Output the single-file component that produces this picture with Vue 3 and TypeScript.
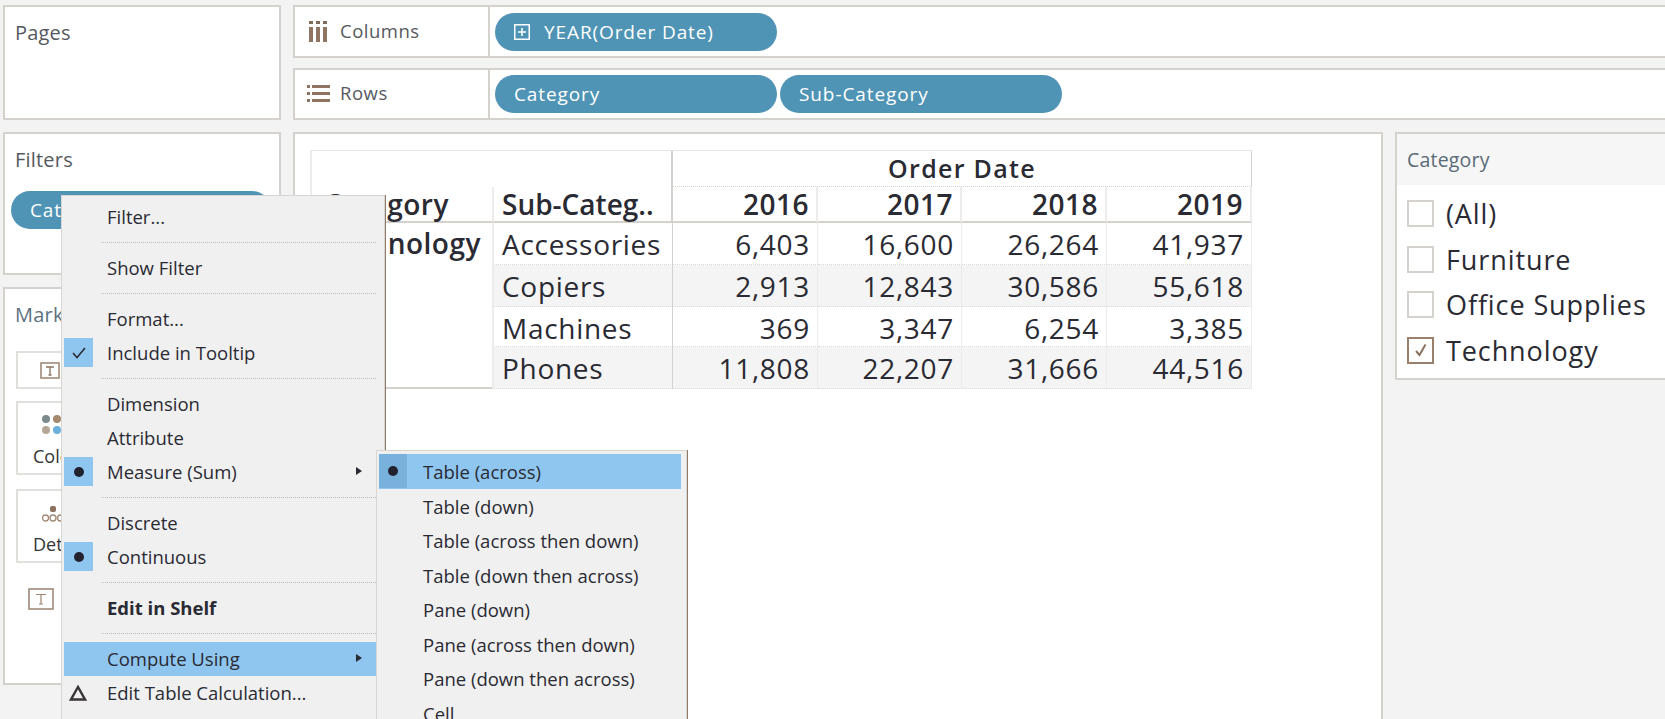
<script setup lang="ts">
type Row = { name: string; vals: string[] };
const years: string[] = ['2016', '2017', '2018', '2019'];
const rows: Row[] = [
  { name: 'Accessories', vals: ['6,403', '16,600', '26,264', '41,937'] },
  { name: 'Copiers', vals: ['2,913', '12,843', '30,586', '55,618'] },
  { name: 'Machines', vals: ['369', '3,347', '6,254', '3,385'] },
  { name: 'Phones', vals: ['11,808', '22,207', '31,666', '44,516'] },
];
const filters = [
  { label: '(All)', checked: false },
  { label: 'Furniture', checked: false },
  { label: 'Office Supplies', checked: false },
  { label: 'Technology', checked: true },
];
type Item = { label?: string; mark?: 'check' | 'dot' | 'delta'; arrow?: boolean; bold?: boolean; hover?: boolean; sep?: boolean };
const menu: Item[] = [
  { label: 'Filter...' },
  { sep: true },
  { label: 'Show Filter' },
  { sep: true },
  { label: 'Format...' },
  { label: 'Include in Tooltip', mark: 'check' },
  { sep: true },
  { label: 'Dimension' },
  { label: 'Attribute' },
  { label: 'Measure (Sum)', mark: 'dot', arrow: true },
  { sep: true },
  { label: 'Discrete' },
  { label: 'Continuous', mark: 'dot' },
  { sep: true },
  { label: 'Edit in Shelf', bold: true },
  { sep: true },
  { label: 'Compute Using', arrow: true, hover: true },
  { label: 'Edit Table Calculation...', mark: 'delta' },
];
const submenu: string[] = [
  'Table (down)',
  'Table (across then down)',
  'Table (down then across)',
  'Pane (down)',
  'Pane (across then down)',
  'Pane (down then across)',
  'Cell',
];
</script>

<template>
  <div class="page">
    <aside class="left">
      <section class="card pages"><div class="cap">Pages</div></section>
      <section class="card filters">
        <div class="cap">Filters</div>
        <div class="pill filter-pill">Category</div>
      </section>
      <section class="card marks">
        <div class="cap marks-cap">Marks</div>
        <div class="mark-type">
          <svg width="20" height="17" viewBox="0 0 20 17"><rect x="1" y="1" width="18" height="15" fill="#fff" stroke="#a08a76" stroke-width="1.6"/><path d="M6 5h8M10 5v8M8.5 13h3" stroke="#8a7460" stroke-width="1.3" fill="none"/></svg>
        </div>
        <div class="mark-btn color-btn">
          <svg width="30" height="22" viewBox="0 0 30 22">
            <circle cx="4" cy="4" r="4" fill="#7b8a8a"/><circle cx="15" cy="4" r="4" fill="#a58a70"/>
            <circle cx="4" cy="15" r="4" fill="#b5a798"/><circle cx="15" cy="15" r="4" fill="#6cb0dc"/>
          </svg>
          <span>Color</span>
        </div>
        <div class="mark-btn detail-btn">
          <svg width="34" height="18" viewBox="0 0 34 18">
            <rect x="8" y="1" width="6" height="6" rx="2" fill="#8a7460"/>
            <circle cx="3.5" cy="13" r="3" fill="none" stroke="#a08a76" stroke-width="1.3"/>
            <circle cx="11" cy="13" r="3" fill="none" stroke="#a08a76" stroke-width="1.3"/>
            <circle cx="18.5" cy="13" r="3" fill="none" stroke="#a08a76" stroke-width="1.3"/>
          </svg>
          <span>Detail</span>
        </div>
        <div class="label-row">
          <svg width="26" height="22" viewBox="0 0 26 22"><rect x="1" y="1" width="24" height="20" fill="#fff" stroke="#a08a76" stroke-width="1.6"/><path d="M8 6.5h10M13 6.5v9.5M11 16h4" stroke="#9a8470" stroke-width="1.2" fill="none"/></svg>
        </div>
      </section>
    </aside>

    <main class="main">
      <div class="shelf columns">
        <div class="shelf-label">
          <svg width="20" height="22" viewBox="0 0 20 22" class="shelf-icon">
            <rect x="1" y="1" width="4" height="3" fill="#7d6a58"/><rect x="8" y="1" width="4" height="3" fill="#7d6a58"/><rect x="15" y="1" width="4" height="3" fill="#7d6a58"/>
            <rect x="1" y="7" width="4" height="15" fill="#8f7561"/><rect x="8" y="7" width="4" height="15" fill="#8f7561"/><rect x="15" y="7" width="4" height="15" fill="#8f7561"/>
          </svg>
          <span>Columns</span>
        </div>
        <div class="shelf-body">
          <div class="pill">
            <svg width="16" height="16" viewBox="0 0 16 16" class="plus"><rect x="0.75" y="0.75" width="14.5" height="14.5" fill="none" stroke="#fff" stroke-width="1.5"/><path d="M8 4v8M4 8h8" stroke="#fff" stroke-width="1.5"/></svg>
            <span>YEAR(Order Date)</span>
          </div>
        </div>
      </div>
      <div class="shelf rows">
        <div class="shelf-label">
          <svg width="24" height="19" viewBox="0 0 24 19" class="shelf-icon rows-icon">
            <rect x="0" y="1" width="3" height="3" fill="#8f7561"/><rect x="0" y="8" width="3" height="3" fill="#8f7561"/><rect x="0" y="15" width="3" height="3" fill="#8f7561"/>
            <rect x="5" y="1" width="18" height="3" fill="#8f7561"/><rect x="5" y="8" width="18" height="3" fill="#8f7561"/><rect x="5" y="15" width="18" height="3" fill="#8f7561"/>
          </svg>
          <span>Rows</span>
        </div>
        <div class="shelf-body">
          <div class="pill">Category</div>
          <div class="pill">Sub-Category</div>
        </div>
      </div>

      <div class="work">
        <section class="view">
          <div class="table">
            <div class="blank"></div>
            <div class="head-order">Order Date</div>
            <div class="head-cat">Category</div>
            <div class="head-sub">Sub-Categ..</div>
            <div v-for="y in years" :key="y" class="head-year">{{ y }}</div>
            <div class="cat-cell">Technology</div>
            <template v-for="(r, i) in rows" :key="r.name">
              <div class="sub-cell" :class="{ alt: i % 2 === 1 }">{{ r.name }}</div>
              <div v-for="(v, j) in r.vals" :key="j" class="num-cell" :class="{ alt: i % 2 === 1 }">{{ v }}</div>
            </template>
          </div>
        </section>

        <section class="legend">
          <div class="legend-head">Category</div>
          <div class="legend-body">
            <div v-for="f in filters" :key="f.label" class="legend-row">
              <span class="box" :class="{ on: f.checked }">
                <svg v-if="f.checked" width="16" height="16" viewBox="0 0 16 16"><path d="M3 9l3.5 4L12.5 2.5" fill="none" stroke="#8a7460" stroke-width="2"/></svg>
              </span>
              <span>{{ f.label }}</span>
            </div>
          </div>
        </section>
      </div>
    </main>

    <div class="menu">
      <template v-for="(m, i) in menu" :key="i">
        <div v-if="m.sep" class="sep"></div>
        <div v-else class="item" :class="{ hover: m.hover, bold: m.bold }">
          <span v-if="m.mark && m.mark !== 'delta'" class="mark">
            <svg v-if="m.mark === 'check'" width="16" height="14" viewBox="0 0 16 14"><path d="M2 7l4 4.5L14 2" fill="none" stroke="#2b2b33" stroke-width="1.6"/></svg>
            <i v-else class="dot"></i>
          </span>
          <span v-else-if="m.mark === 'delta'" class="delta">
            <svg width="18" height="16" viewBox="0 0 18 16"><path d="M9 2L2 14.5h14z" fill="none" stroke="#3a3536" stroke-width="2.4"/></svg>
          </span>
          <span>{{ m.label }}</span>
          <i v-if="m.arrow" class="arrow"></i>
        </div>
      </template>
    </div>

    <div class="submenu">
      <div class="item sub-hover">
        <span class="mark sub-mark"><i class="dot"></i></span>
        <span>Table (across)</span>
      </div>
      <div v-for="s in submenu" :key="s" class="item">{{ s }}</div>
    </div>
  </div>
</template>

<style>
html, body { margin: 0; background: #f3f3f3; }
</style>

<style scoped>
.page {
  position: relative;
  box-sizing: border-box;
  height: 719px;
  overflow: hidden;
  padding: 5px 0 0 3px;
  display: grid;
  grid-template-columns: 278px 1fr;
  column-gap: 12px;
  background: #f3f3f3;
  font-family: "Open Sans", "Noto Sans", sans-serif;
  color: #2a2a33;
}
.left { display: flex; flex-direction: column; gap: 12px; }
.card { box-sizing: border-box; background: #fff; border: 2px solid #d5d1cc; }
.cap { font-size: 20px; letter-spacing: 0.2px; color: #55595e; padding: 15px 0 0 10px; line-height: 22px; }
.pages { height: 115px; }
.filters { height: 143px; }
.marks { height: 398px; position: relative; }
.marks-cap { padding-top: 15px; color: #5d7280; }

.pill {
  box-sizing: border-box;
  width: 282px;
  height: 38px;
  border-radius: 19px;
  background: #4f94b5;
  color: #fff;
  font-size: 19px;
  letter-spacing: 0.9px;
  display: flex;
  align-items: center;
  padding-left: 19px;
  flex: none;
}
.pill.filter-pill { margin: 20px 0 0 6px; width: 260px; }
.plus { margin-right: 14px; }

.main { display: flex; flex-direction: column; min-width: 0; }
.shelf { box-sizing: border-box; display: flex; background: #fff; border: 2px solid #d5d1cc; border-right: 0; }
.columns { height: 53px; margin-bottom: 10px; }
.rows { height: 52px; margin-bottom: 12px; }
.shelf-label {
  box-sizing: border-box;
  width: 195px;
  flex: none;
  display: flex;
  align-items: center;
  padding-left: 13px;
  gap: 12px;
  font-size: 18.5px;
  letter-spacing: 0.5px;
  line-height: 24px;
  padding-bottom: 2px;
  color: #55595e;
  border-right: 2px solid #d5d1cc;
}
.shelf-icon { flex: none; }
.rows-icon { margin-right: -3px; margin-left: -1px; }
.shelf-body { display: flex; align-items: center; gap: 3px; padding-left: 5px; }

.work { display: flex; gap: 12px; flex: 1; min-height: 0; }
.view {
  box-sizing: border-box;
  width: 1090px;
  flex: none;
  background: #fff;
  border: 2px solid #d5d1cc;
  border-bottom: 0;
  padding: 16px 0 0 15px;
}
.table {
  display: grid;
  grid-template-columns: 182px 181px 145px 144px 145px 145px;
  grid-template-rows: 36px 36px 42px 42px 40px 42px;
  width: 942px;
  box-sizing: border-box;
  border-top: 1px solid #e6e4e1;
  font-size: 28px;
  letter-spacing: 0.7px;
}
.blank { grid-column: 1 / 3; grid-row: 1; border-left: 2px solid #eeecea; border-right: 2px solid #d5d1cc; }
.head-order {
  grid-column: 3 / 7;
  grid-row: 1;
  text-align: center;
  font-weight: 600;
  font-size: 25px;
  letter-spacing: 1.3px;
  line-height: 34px;
  border-right: 1px solid #d5d1cc;
  border-bottom: 1px dotted #d5d1cc;
}
.head-cat, .head-sub, .head-year {
  grid-row: 2;
  font-weight: 600;
  line-height: 34px;
  border-bottom: 2px solid #d5d1cc;
  box-sizing: border-box;
  letter-spacing: 0.5px;
}
.head-cat { padding-left: 12px; border-left: 2px solid #eeecea; }
.head-sub { padding-left: 8px; border-left: 2px solid #eeecea; border-right: 2px solid #d5d1cc; letter-spacing: 0; white-space: nowrap; }
.head-year { text-align: right; padding-right: 7px; border-right: 2px solid #eeecea; }
.cat-cell {
  grid-column: 1;
  grid-row: 3 / 7;
  font-weight: 600;
  padding: 2px 0 0 12px;
  line-height: 36px;
  letter-spacing: 0.5px;
  border-bottom: 2px solid #d5d1cc;
  box-sizing: border-box;
  white-space: nowrap;
}
.sub-cell, .num-cell { line-height: 42px; border-bottom: 1px dotted #dcdad7; box-sizing: border-box; }
.sub-cell { padding-left: 8px; border-left: 2px solid #eeecea; border-right: 1px solid #d5d1cc; white-space: nowrap; }
.num-cell { text-align: right; padding-right: 7px; border-right: 1px solid #eeecea; }
.alt { background: #f4f4f4; }

.legend { flex: 1; align-self: flex-start; height: 248px; box-sizing: border-box; border: 2px solid #d5d1cc; border-right: 0; background: #fff; }
.legend-head {
  height: 51px;
  background: #f6f6f6;
  font-size: 19.5px;
  letter-spacing: 0.2px;
  color: #5a6b78;
  line-height: 52px;
  padding-left: 10px;
}
.legend-body { padding-top: 6px; }
.legend-row {
  height: 45.5px;
  display: flex;
  align-items: center;
  gap: 12px;
  padding-left: 10px;
  font-size: 27px;
  letter-spacing: 0.9px;
  white-space: nowrap;
}
.box {
  box-sizing: border-box;
  width: 27px;
  height: 27px;
  border: 2px solid #d5d1cc;
  background: #fff;
  display: flex;
  align-items: center;
  justify-content: center;
  flex: none;
}
.box.on { border-color: #98806c; }

.menu, .submenu {
  position: absolute;
  box-sizing: border-box;
  background: #f0f0f0;
  border: 1px solid #d8d6d2;
  font-family: "Open Sans", sans-serif;
  font-size: 18.5px;
  color: #2a2a33;
  z-index: 2;
}
.menu {
  left: 61px;
  top: 195px;
  width: 324px;
  height: 560px;
  padding: 4px 8px 0 2px;
  box-shadow: 1px 0 0 #8f7a68;
}
.submenu {
  left: 376px;
  top: 450px;
  width: 311px;
  height: 300px;
  padding: 3px 5px 0 2px;
  box-shadow: 1px 0 0 #8f7a68;
  z-index: 3;
}
.item {
  position: relative;
  height: 34px;
  line-height: 34px;
  padding-left: 43px;
  white-space: nowrap;
}
.item.bold { font-weight: 700; }
.item.hover { background: #8fc6f0; }
.sep { height: 17px; position: relative; }
.sep::after {
  content: '';
  position: absolute;
  left: 37px;
  right: 0;
  top: 8px;
  border-top: 1px dotted #c4c2be;
}
.mark {
  position: absolute;
  left: 0;
  top: 2px;
  width: 29px;
  height: 29px;
  background: #8fc6f0;
  display: flex;
  align-items: center;
  justify-content: center;
}
.dot { display: block; width: 10px; height: 10px; border-radius: 50%; background: #22222e; }
.delta { position: absolute; left: 5px; top: 9px; display: flex; }
.arrow {
  position: absolute;
  right: 14px;
  top: 12px;
  width: 0;
  height: 0;
  border-left: 6px solid #2a2a33;
  border-top: 4.5px solid transparent;
  border-bottom: 4.5px solid transparent;
}
.submenu .item { padding-left: 44px; height: 34.5px; line-height: 35px; }
.submenu .sub-hover { background: #8fc6f0; }
.sub-mark { background: #79b1dd; top: 0; width: 28px; height: 34px; }

.mark-type, .mark-btn {
  position: absolute;
  left: 11px;
  width: 120px;
  box-sizing: border-box;
  border: 2px solid #e1dfdc;
  background: #fff;
}
.mark-type { top: 62px; height: 38px; display: flex; align-items: center; padding-left: 22px; }
.mark-btn { height: 74px; font-size: 18px; color: #333; }
.color-btn { top: 112px; }
.detail-btn { top: 200px; }
.mark-btn svg { position: absolute; left: 24px; top: 12px; }
.mark-btn span { position: absolute; left: 15px; top: 41px; }
.detail-btn svg { top: 14px; }
.label-row { position: absolute; left: 23px; top: 299px; }
</style>
